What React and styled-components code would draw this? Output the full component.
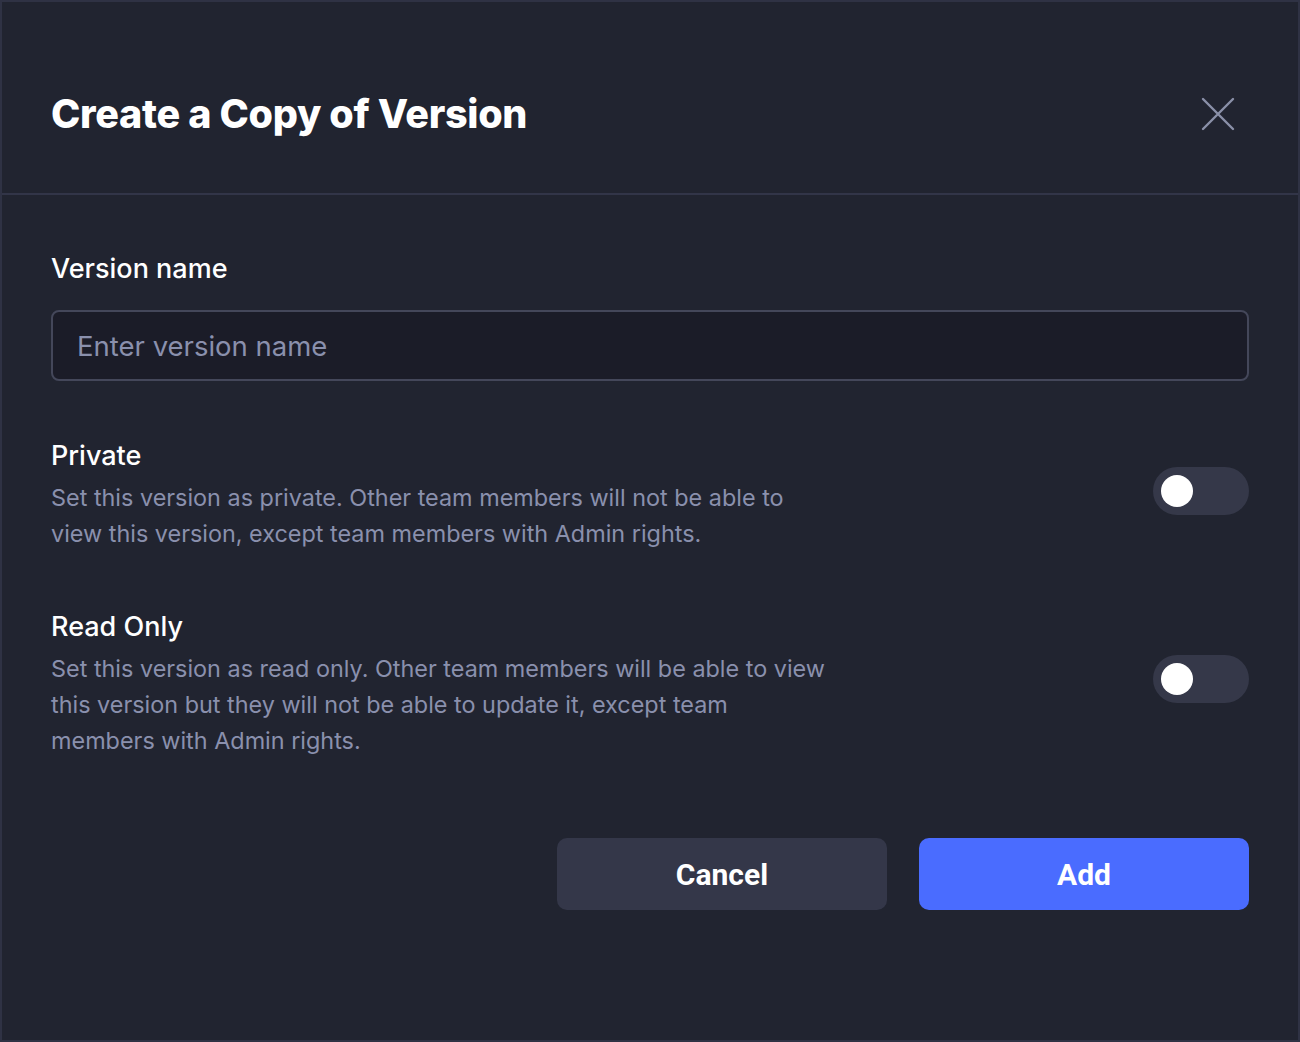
import React from "react";
import styled, { createGlobalStyle } from "styled-components";

const Global = createGlobalStyle`
  html, body { margin: 0; padding: 0; background: #212430; }
  * { box-sizing: border-box; }
`;

const Dialog = styled.div`
  width: 1300px;
  height: 1042px;
  background: #212430;
  border: 2px solid #2f3244;
  display: flex;
  flex-direction: column;
  font-family: Inter, "Noto Sans", sans-serif;
  color: #ffffff;
`;

const Header = styled.div`
  height: 193px;
  flex-shrink: 0;
  display: flex;
  align-items: center;
  justify-content: space-between;
  padding: 32px 62px 0 49px;
  border-bottom: 2px solid #323548;
`;

const Title = styled.h1`
  margin: 0;
  font-family: Inter, Roboto, sans-serif;
  font-weight: 800;
  font-size: 39.5px;
  letter-spacing: -0.3px;
  color: #ffffff;
`;

const CloseButton = styled.button`
  width: 36px;
  height: 36px;
  padding: 0;
  border: none;
  background: transparent;
  display: flex;
  align-items: center;
  justify-content: center;
  cursor: pointer;
`;

const Body = styled.div`
  padding: 58px 49px 0 49px;
  display: flex;
  flex-direction: column;
`;

const FieldLabel = styled.label`
  font-size: 27px;
  font-weight: 500;
  line-height: 32px;
  color: #ffffff;
  margin-bottom: 25px;
`;

const Input = styled.input`
  width: 100%;
  height: 71px;
  background: #1b1c28;
  border: 2px solid #44475a;
  border-radius: 8px;
  padding: 0 24px;
  font-family: Inter, sans-serif;
  font-size: 27.5px;
  color: #ffffff;
  outline: none;
  &::placeholder { color: #8a90ad; }
`;

const OptionRow = styled.div`
  display: flex;
  align-items: center;
  justify-content: space-between;
  margin-top: ${(p) => p.$top}px;
`;

const OptionText = styled.div`
  display: flex;
  flex-direction: column;
  width: 820px;
`;

const OptionTitle = styled.div`
  font-size: 27px;
  font-weight: 500;
  line-height: 32px;
  color: #ffffff;
  margin-bottom: 8px;
`;

const OptionDesc = styled.div`
  font-size: 23.4px;
  line-height: 36px;
  color: #8a90ad;
`;

const Toggle = styled.div`
  width: 96px;
  height: 48px;
  border-radius: 24px;
  background: #353849;
  display: flex;
  align-items: center;
  padding: 0 8px;
  flex-shrink: 0;
  margin-top: ${(p) => p.$shift}px;
`;

const Knob = styled.div`
  width: 32px;
  height: 32px;
  border-radius: 50%;
  background: #ffffff;
`;

const Footer = styled.div`
  display: flex;
  justify-content: flex-end;
  gap: 32px;
  margin-top: 79px;
`;

const Button = styled.button`
  width: 330px;
  height: 72px;
  border: none;
  border-radius: 10px;
  background: ${(p) => (p.$primary ? "#4a6cff" : "#343749")};
  color: #ffffff;
  font-family: Roboto, Inter, sans-serif;
  font-weight: 700;
  font-size: 30px;
  cursor: pointer;
`;

function Switch({ shift = 0 }) {
  return (
    <Toggle $shift={shift}>
      <Knob />
    </Toggle>
  );
}

export default function App() {
  return (
    <>
      <Global />
      <Dialog>
        <Header>
          <Title>Create a Copy of Version</Title>
          <CloseButton aria-label="Close">
            <svg width="34" height="34" viewBox="0 0 34 34" fill="none">
              <path d="M2 2L32 32M32 2L2 32" stroke="#8a90a8" strokeWidth="2.4" strokeLinecap="round" />
            </svg>
          </CloseButton>
        </Header>
        <Body>
          <FieldLabel>Version name</FieldLabel>
          <Input placeholder="Enter version name" />
          <OptionRow $top={59}>
            <OptionText>
              <OptionTitle>Private</OptionTitle>
              <OptionDesc>
                Set this version as private. Other team members will not be able to
                <br />
                view this version, except team members with Admin rights.
              </OptionDesc>
            </OptionText>
            <Switch shift={-10} />
          </OptionRow>
          <OptionRow $top={59}>
            <OptionText>
              <OptionTitle>Read Only</OptionTitle>
              <OptionDesc>
                Set this version as read only. Other team members will be able to view
                <br />
                this version but they will not be able to update it, except team
                <br />
                members with Admin rights.
              </OptionDesc>
            </OptionText>
            <Switch shift={-12} />
          </OptionRow>
          <Footer>
            <Button>Cancel</Button>
            <Button $primary>Add</Button>
          </Footer>
        </Body>
      </Dialog>
    </>
  );
}
